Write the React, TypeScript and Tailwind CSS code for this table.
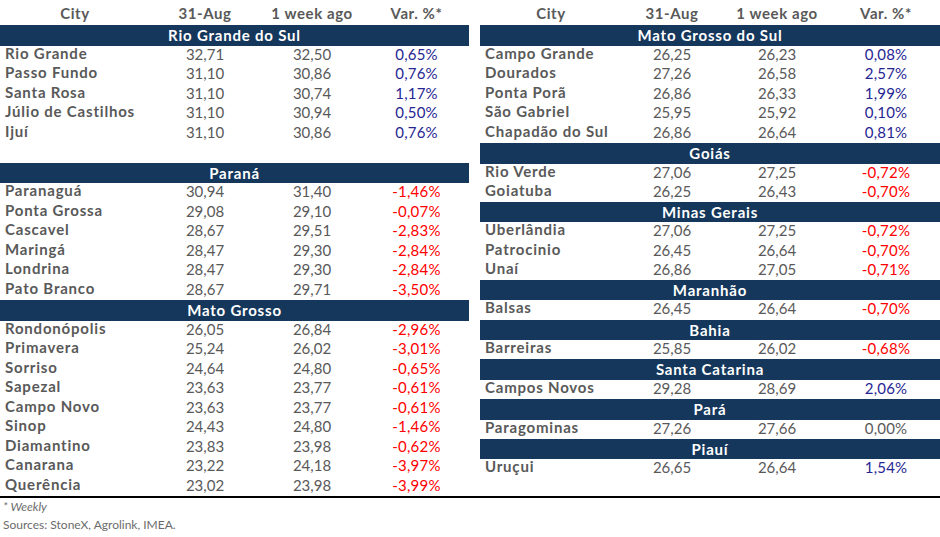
import React from "react";

type Row = [string, string, string, string];
type Group = { title: string; rows: Row[]; after?: number };

const left: Group[] = [
  {
    title: "Rio Grande do Sul",
    rows: [
      ["Rio Grande", "32,71", "32,50", "0,65%"],
      ["Passo Fundo", "31,10", "30,86", "0,76%"],
      ["Santa Rosa", "31,10", "30,74", "1,17%"],
      ["Júlio de Castilhos", "31,10", "30,94", "0,50%"],
      ["Ijuí", "31,10", "30,86", "0,76%"],
    ],
    after: 1,
  },
  {
    title: "Paraná",
    rows: [
      ["Paranaguá", "30,94", "31,40", "-1,46%"],
      ["Ponta Grossa", "29,08", "29,10", "-0,07%"],
      ["Cascavel", "28,67", "29,51", "-2,83%"],
      ["Maringá", "28,47", "29,30", "-2,84%"],
      ["Londrina", "28,47", "29,30", "-2,84%"],
      ["Pato Branco", "28,67", "29,71", "-3,50%"],
    ],
  },
  {
    title: "Mato Grosso",
    rows: [
      ["Rondonópolis", "26,05", "26,84", "-2,96%"],
      ["Primavera", "25,24", "26,02", "-3,01%"],
      ["Sorriso", "24,64", "24,80", "-0,65%"],
      ["Sapezal", "23,63", "23,77", "-0,61%"],
      ["Campo Novo", "23,63", "23,77", "-0,61%"],
      ["Sinop", "24,43", "24,80", "-1,46%"],
      ["Diamantino", "23,83", "23,98", "-0,62%"],
      ["Canarana", "23,22", "24,18", "-3,97%"],
      ["Querência", "23,02", "23,98", "-3,99%"],
    ],
  },
];

const right: Group[] = [
  {
    title: "Mato Grosso do Sul",
    rows: [
      ["Campo Grande", "26,25", "26,23", "0,08%"],
      ["Dourados", "27,26", "26,58", "2,57%"],
      ["Ponta Porã", "26,86", "26,33", "1,99%"],
      ["São Gabriel", "25,95", "25,92", "0,10%"],
      ["Chapadão do Sul", "26,86", "26,64", "0,81%"],
    ],
  },
  {
    title: "Goiás",
    rows: [
      ["Rio Verde", "27,06", "27,25", "-0,72%"],
      ["Goiatuba", "26,25", "26,43", "-0,70%"],
    ],
  },
  {
    title: "Minas Gerais",
    rows: [
      ["Uberlândia", "27,06", "27,25", "-0,72%"],
      ["Patrocinio", "26,45", "26,64", "-0,70%"],
      ["Unaí", "26,86", "27,05", "-0,71%"],
    ],
  },
  { title: "Maranhão", rows: [["Balsas", "26,45", "26,64", "-0,70%"]] },
  { title: "Bahia", rows: [["Barreiras", "25,85", "26,02", "-0,68%"]] },
  { title: "Santa Catarina", rows: [["Campos Novos", "29,28", "28,69", "2,06%"]] },
  { title: "Pará", rows: [["Paragominas", "27,26", "27,66", "0,00%"]] },
  { title: "Piauí", rows: [["Uruçui", "26,65", "26,64", "1,54%"]] },
];

const font = { fontFamily: '"Lato", "Noto Sans", sans-serif' };

function varColor(v: string) {
  if (v.startsWith("-")) return "text-[#ff0000]";
  if (v === "0,00%") return "text-[#595959]";
  return "text-[#262693]";
}

function Table({
  groups,
  cols,
  rowH,
  firstRowH,
}: {
  groups: Group[];
  cols: string;
  rowH: string;
  firstRowH: string;
}) {
  return (
    <div className="flex flex-col">
      <div className={`grid ${cols} h-[25px] pt-[2px] items-center text-[15px] font-bold text-[#595959] tracking-[0.6px]`}>
        <div className="text-center">City</div>
        <div className="text-center">31-Aug</div>
        <div className="text-center">1 week ago</div>
        <div className="text-center">Var. %*</div>
      </div>
      {groups.map((g, gi) => (
        <div key={g.title} className="flex flex-col">
          <div className="h-[20.5px] bg-[#14375b] flex items-center justify-center text-white text-[15px] font-bold tracking-[0.8px]">
            {g.title}
          </div>
          {g.rows.map((r) => (
            <div
              key={r[0]}
              className={`grid ${cols} ${gi === 0 ? firstRowH : rowH} items-start text-[15px] leading-[15px] text-[#595959]`}
            >
              <div className="pl-[5px] font-bold whitespace-nowrap tracking-[0.8px]">{r[0]}</div>
              <div className="text-center pt-[1px]">{r[1]}</div>
              <div className="text-center pt-[1px]">{r[2]}</div>
              <div className={`text-center pt-[1px] tracking-[0.2px] ${varColor(r[3])}`}>{r[3]}</div>
            </div>
          ))}
          {g.after ? <div className="h-[19.5px]" /> : null}
        </div>
      ))}
    </div>
  );
}

export default function App() {
  return (
    <div className="w-[940px] h-[537px] bg-white flex flex-col" style={font}>
      <div className="flex h-[496px] gap-[11px]">
        <div className="w-[469px]">
          <Table
            groups={left}
            cols="grid-cols-[150px_110px_104px_1fr]"
            rowH="h-[19.5px]"
            firstRowH="h-[19.5px]"
          />
        </div>
        <div className="flex-1">
          <Table
            groups={right}
            cols="grid-cols-[142px_100px_110px_1fr]"
            rowH="h-[19.2px]"
            firstRowH="h-[19.5px]"
          />
        </div>
      </div>
      <div className="border-t-2 border-black" />
      <div className="pl-[3px] text-[12px] text-[#6b6b6b] italic leading-[18px]">* Weekly</div>
      <div className="pl-[3px] text-[12px] text-[#6b6b6b] leading-[18px]">Sources: StoneX, Agrolink, IMEA.</div>
    </div>
  );
}
